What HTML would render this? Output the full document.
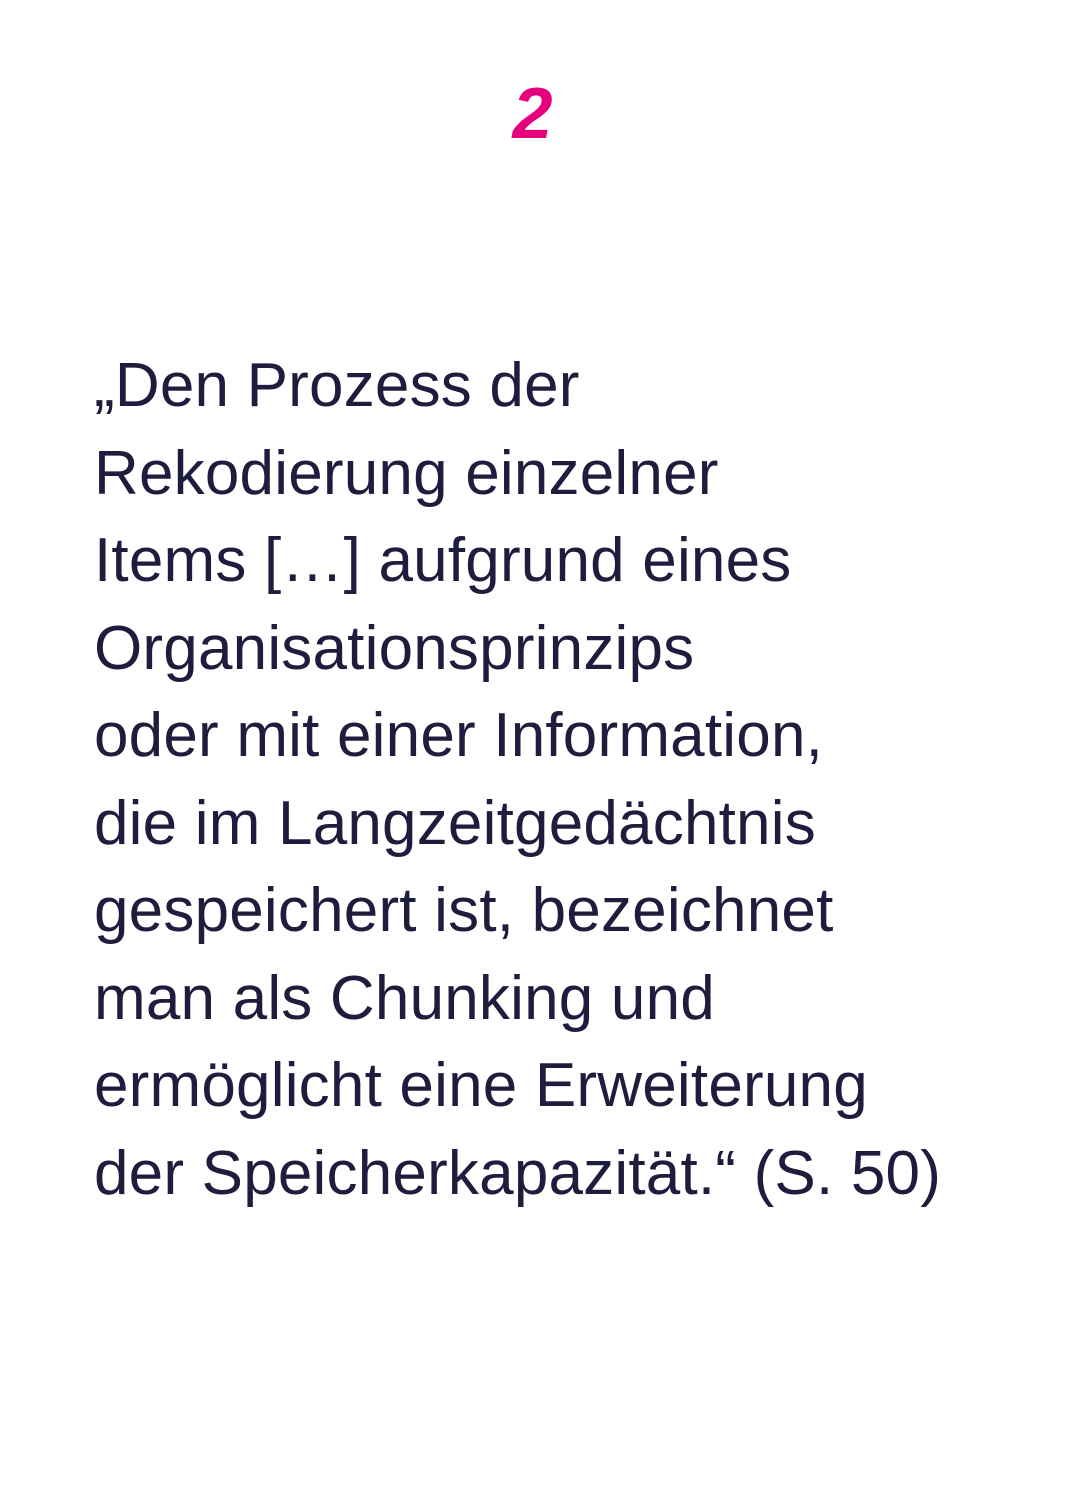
<!DOCTYPE html>
<html><head><meta charset="utf-8"><style>
html,body{margin:0;padding:0;background:#fff;width:1065px;height:1506px;overflow:hidden}
.num{position:absolute;top:70px;left:0;width:1065px;text-align:center;font-family:"Liberation Sans",sans-serif;font-weight:bold;font-style:italic;font-size:72px;color:#e6007e;line-height:88px}
.txt{position:absolute;left:94px;top:342px;font-family:"Liberation Sans",sans-serif;font-size:62px;line-height:87.5px;color:#1f1d3d;white-space:nowrap;letter-spacing:0.2px}
</style></head><body>
<div class="num">2</div>
<div class="txt">„Den Prozess der<br>Rekodierung einzelner<br>Items […] aufgrund eines<br>Organisationsprinzips<br>oder mit einer Information,<br>die im Langzeitgedächtnis<br>gespeichert ist, bezeichnet<br>man als Chunking und<br>ermöglicht eine Erweiterung<br>der Speicherkapazität.“ (S. 50)</div>
</body></html>
